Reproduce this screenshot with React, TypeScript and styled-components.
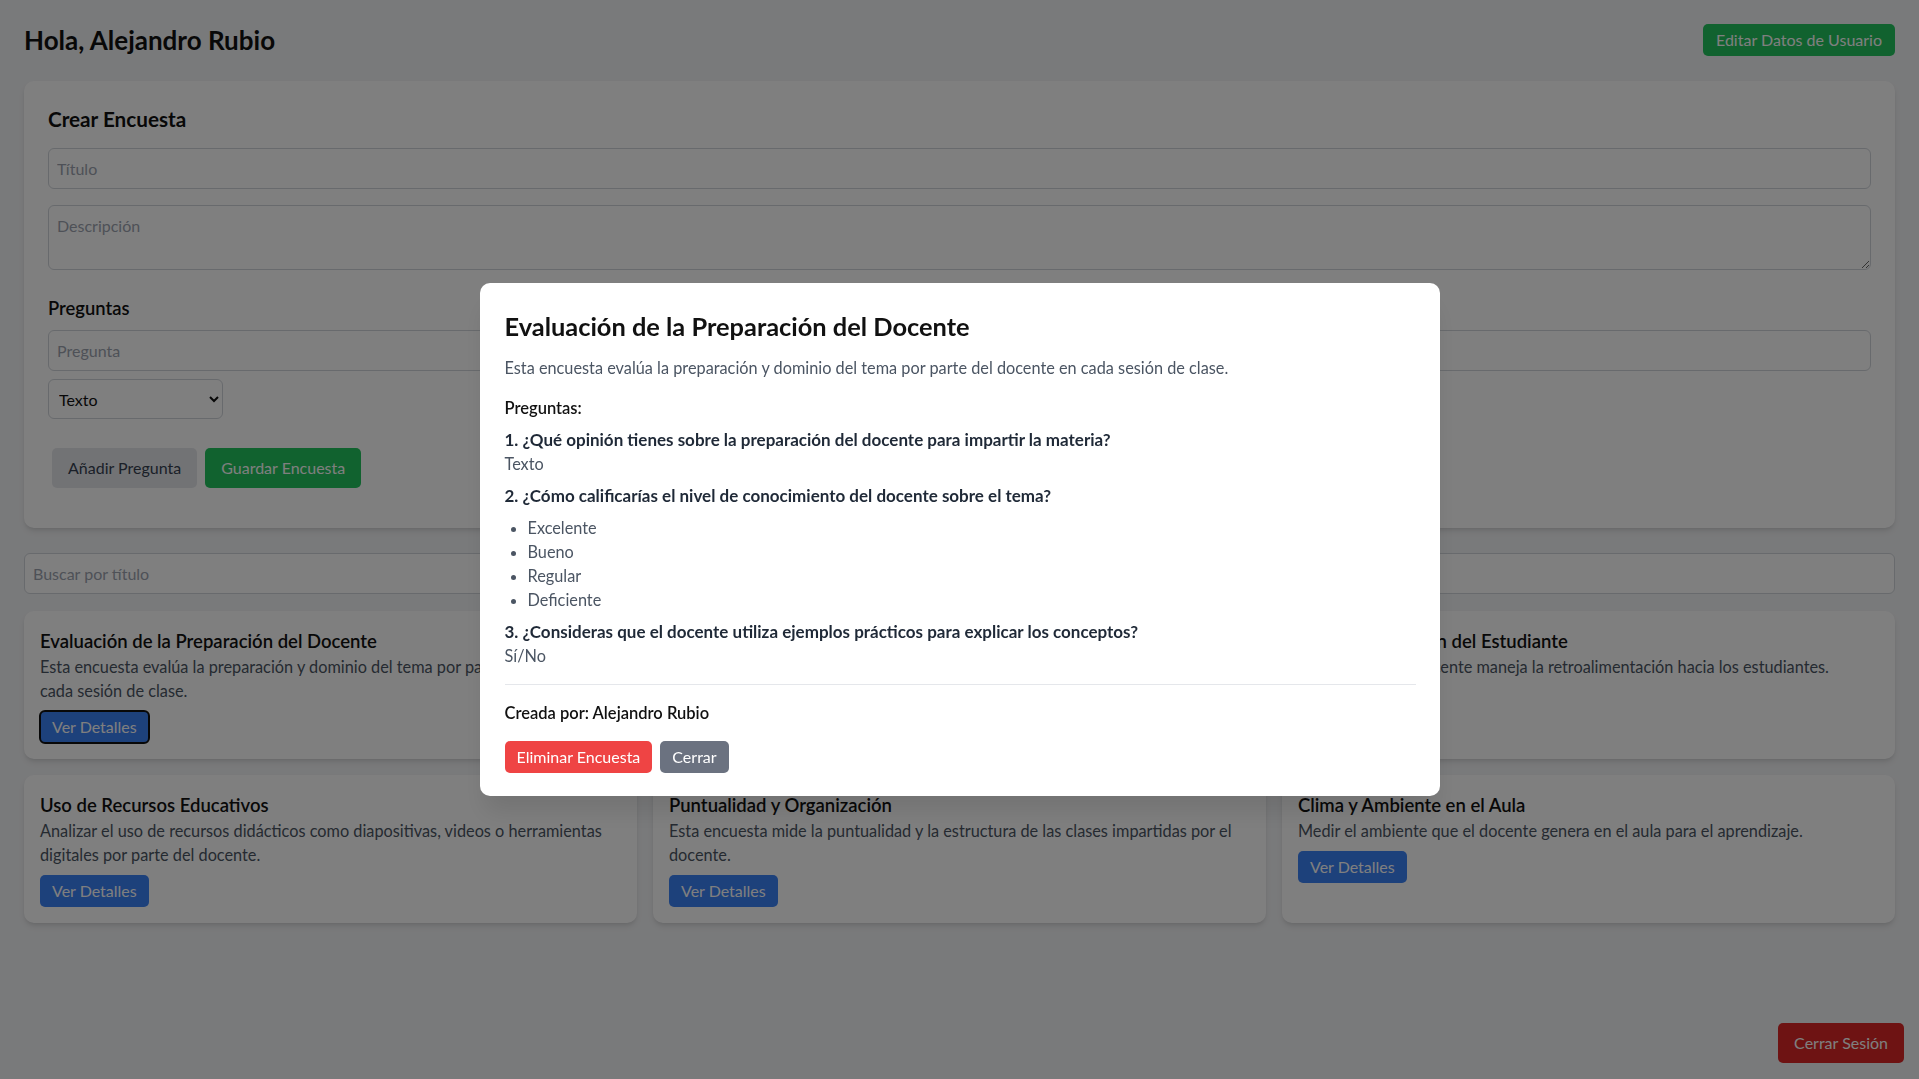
import styled, { createGlobalStyle } from "styled-components";

const GlobalStyle = createGlobalStyle`
  html, body {
    margin: 0;
    padding: 0;
    background: #f3f4f6;
  }
  body {
    font-family: "Segoe UI", Lato, "Liberation Sans", sans-serif;
    font-size: 16.3px;
    line-height: 24px;
    color: #111827;
  }
  * { box-sizing: border-box; }
`;

type Variant = "green" | "blue" | "red" | "danger" | "gray" | "light";

const variantColors: Record<Variant, { bg: string; fg: string }> = {
  green: { bg: "#22c55e", fg: "#ffffff" },
  blue: { bg: "#3b82f6", fg: "#ffffff" },
  red: { bg: "#dc2626", fg: "#ffffff" },
  danger: { bg: "#ef4444", fg: "#ffffff" },
  gray: { bg: "#6b7280", fg: "#ffffff" },
  light: { bg: "#e5e7eb", fg: "#374151" },
};

const Button = styled.button<{ $variant: Variant; $h?: number; $px?: number; $focused?: boolean }>`
  height: ${({ $h }) => $h ?? 32}px;
  padding: 0 ${({ $px }) => $px ?? 12}px;
  border: none;
  border-radius: 5px;
  font-family: inherit;
  font-size: 16px;
  line-height: 24px;
  cursor: pointer;
  background: ${({ $variant }) => variantColors[$variant].bg};
  color: ${({ $variant }) => variantColors[$variant].fg};
  outline: ${({ $focused }) => ($focused ? "2px solid #111111" : "none")};
  outline-offset: -1px;
`;

const Page = styled.div`
  min-height: 100vh;
  padding: 24px;
`;

const Header = styled.header`
  display: flex;
  justify-content: space-between;
  align-items: center;
  height: 32px;
  margin-bottom: 25px;
`;

const Greeting = styled.h1`
  margin: 0;
  font-size: 26px;
  font-weight: 700;
  line-height: 32px;
  color: #111111;
`;

const Panel = styled.section`
  background: #ffffff;
  border-radius: 10px;
  box-shadow: 0 4px 6px -1px rgba(0, 0, 0, 0.1), 0 2px 4px -2px rgba(0, 0, 0, 0.1);
  padding: 24px;
  margin-bottom: 25px;
`;

const PanelTitle = styled.h2`
  margin: 0 0 15px;
  font-size: 20.7px;
  line-height: 28px;
  font-weight: 700;
  color: #111111;
`;

const SubTitle = styled.h3`
  margin: 24px 0 8px;
  font-size: 18.4px;
  line-height: 28px;
  font-weight: 600;
  color: #111111;
`;

const TextInput = styled.input<{ $mb?: number }>`
  display: block;
  width: 100%;
  height: 41px;
  padding: 8px;
  margin-bottom: ${({ $mb }) => $mb ?? 16}px;
  border: 1px solid #d1d5db;
  border-radius: 6px;
  background: #ffffff;
  font-family: inherit;
  font-size: 16px;
  color: #111827;
  &::placeholder { color: #9ca3af; }
`;

const TextArea = styled.textarea`
  display: block;
  width: 100%;
  height: 65px;
  padding: 8px;
  margin: 0 0 16px;
  border: 1px solid #d1d5db;
  border-radius: 6px;
  font-family: inherit;
  font-size: 16px;
  line-height: 24px;
  &::placeholder { color: #9ca3af; }
`;

const Select = styled.select`
  display: block;
  width: 175px;
  height: 40px;
  padding: 0 6px;
  margin-bottom: 8px;
  border: 1px solid #d1d5db;
  border-radius: 6px;
  background: #ffffff;
  font-family: inherit;
  font-size: 16px;
  color: #111111;
`;

const ButtonRow = styled.div`
  display: flex;
  gap: 8px;
  margin: 29px 0 16px 4px;
`;

const Search = styled(TextInput)`
  margin-bottom: 17px;
`;

const Grid = styled.div`
  display: grid;
  grid-template-columns: repeat(3, 1fr);
  gap: 16px;
`;

const Card = styled.article`
  background: #ffffff;
  border-radius: 10px;
  box-shadow: 0 4px 6px -1px rgba(0, 0, 0, 0.1), 0 2px 4px -2px rgba(0, 0, 0, 0.1);
  padding: 16px;
`;

const CardTitle = styled.h4`
  margin: 0;
  font-size: 18.5px;
  line-height: 28px;
  font-weight: 600;
  color: #111111;
`;

const CardText = styled.p`
  margin: 0 0 8px;
  color: #4b5563;
`;

const LogoutButton = styled(Button)`
  position: fixed;
  right: 15px;
  bottom: 16px;
`;

const Overlay = styled.div`
  position: fixed;
  inset: 0;
  background: rgba(0, 0, 0, 0.5);
  display: flex;
  align-items: center;
  justify-content: center;
  z-index: 10;
`;

const Modal = styled.div`
  width: 960px;
  background: #ffffff;
  border-radius: 10px;
  padding: 25px 24px 23px 25px;
  box-shadow: 0 20px 25px -5px rgba(0, 0, 0, 0.1);
`;

const ModalTitle = styled.h2`
  margin: 0 0 12px;
  font-size: 25.4px;
  line-height: 36px;
  font-weight: 700;
  color: #111111;
`;

const ModalText = styled.p`
  margin: 0 0 16px;
  color: #4b5563;
`;

const Label = styled.p`
  margin: 0 0 8px;
  font-size: 16.5px;
  font-weight: 600;
  color: #111111;
`;

const Question = styled.div`
  margin-bottom: 8px;
`;

const QuestionText = styled.p`
  margin: 0;
  font-size: 17px;
  font-weight: 700;
  color: #1f2937;
`;

const QuestionType = styled.p`
  margin: 0;
  color: #4b5563;
`;

const Options = styled.ul`
  margin: 8px 0 0;
  padding-left: 23px;
  color: #4b5563;
  list-style: disc;
`;

const Divider = styled.hr`
  border: none;
  border-top: 1px solid #e5e7eb;
  margin: 16px 0;
`;

const ModalActions = styled.div`
  display: flex;
  gap: 8px;
  margin-top: 16px;
`;

const surveys = [
  {
    title: "Evaluación de la Preparación del Docente",
    text: "Esta encuesta evalúa la preparación y dominio del tema por parte del docente en cada sesión de clase.",
  },
  {
    title: "Metodología de Enseñanza",
    text: "Evaluar las estrategias y métodos que utiliza el docente durante las clases.",
  },
  {
    title: "Retroalimentación del Estudiante",
    text: "Evaluar cómo el docente maneja la retroalimentación hacia los estudiantes.",
  },
  {
    title: "Uso de Recursos Educativos",
    text: "Analizar el uso de recursos didácticos como diapositivas, videos o herramientas digitales por parte del docente.",
  },
  {
    title: "Puntualidad y Organización",
    text: "Esta encuesta mide la puntualidad y la estructura de las clases impartidas por el docente.",
  },
  {
    title: "Clima y Ambiente en el Aula",
    text: "Medir el ambiente que el docente genera en el aula para el aprendizaje.",
  },
];

const App = () => {
  return (
    <>
      <GlobalStyle />
      <Page>
        <Header>
          <Greeting>Hola, Alejandro Rubio</Greeting>
          <Button $variant="green" $px={13}>Editar Datos de Usuario</Button>
        </Header>

        <Panel>
          <PanelTitle>Crear Encuesta</PanelTitle>
          <TextInput placeholder="Título" />
          <TextArea placeholder="Descripción" />
          <SubTitle>Preguntas</SubTitle>
          <TextInput placeholder="Pregunta" $mb={8} />
          <Select defaultValue="texto">
            <option value="texto">Texto</option>
            <option value="opciones">Opción múltiple</option>
            <option value="sino">Sí/No</option>
          </Select>
          <ButtonRow>
            <Button $variant="light" $h={40} $px={16}>Añadir Pregunta</Button>
            <Button $variant="green" $h={40} $px={16}>Guardar Encuesta</Button>
          </ButtonRow>
        </Panel>

        <Search placeholder="Buscar por título" />

        <Grid>
          {surveys.map((s, i) => (
            <Card key={s.title}>
              <CardTitle>{s.title}</CardTitle>
              <CardText>{s.text}</CardText>
              <Button $variant="blue" $focused={i === 0}>Ver Detalles</Button>
            </Card>
          ))}
        </Grid>

        <LogoutButton $variant="red" $h={40} $px={16}>Cerrar Sesión</LogoutButton>
      </Page>

      <Overlay>
        <Modal>
          <ModalTitle>Evaluación de la Preparación del Docente</ModalTitle>
          <ModalText>
            Esta encuesta evalúa la preparación y dominio del tema por parte del docente en cada sesión de clase.
          </ModalText>
          <Label>Preguntas:</Label>
          <Question>
            <QuestionText>1. ¿Qué opinión tienes sobre la preparación del docente para impartir la materia?</QuestionText>
            <QuestionType>Texto</QuestionType>
          </Question>
          <Question>
            <QuestionText>2. ¿Cómo calificarías el nivel de conocimiento del docente sobre el tema?</QuestionText>
            <Options>
              <li>Excelente</li>
              <li>Bueno</li>
              <li>Regular</li>
              <li>Deficiente</li>
            </Options>
          </Question>
          <Question>
            <QuestionText>3. ¿Consideras que el docente utiliza ejemplos prácticos para explicar los conceptos?</QuestionText>
            <QuestionType>Sí/No</QuestionType>
          </Question>
          <Divider />
          <Label>Creada por: Alejandro Rubio</Label>
          <ModalActions>
            <Button $variant="danger">Eliminar Encuesta</Button>
            <Button $variant="gray">Cerrar</Button>
          </ModalActions>
        </Modal>
      </Overlay>
    </>
  );
};

export default App;
